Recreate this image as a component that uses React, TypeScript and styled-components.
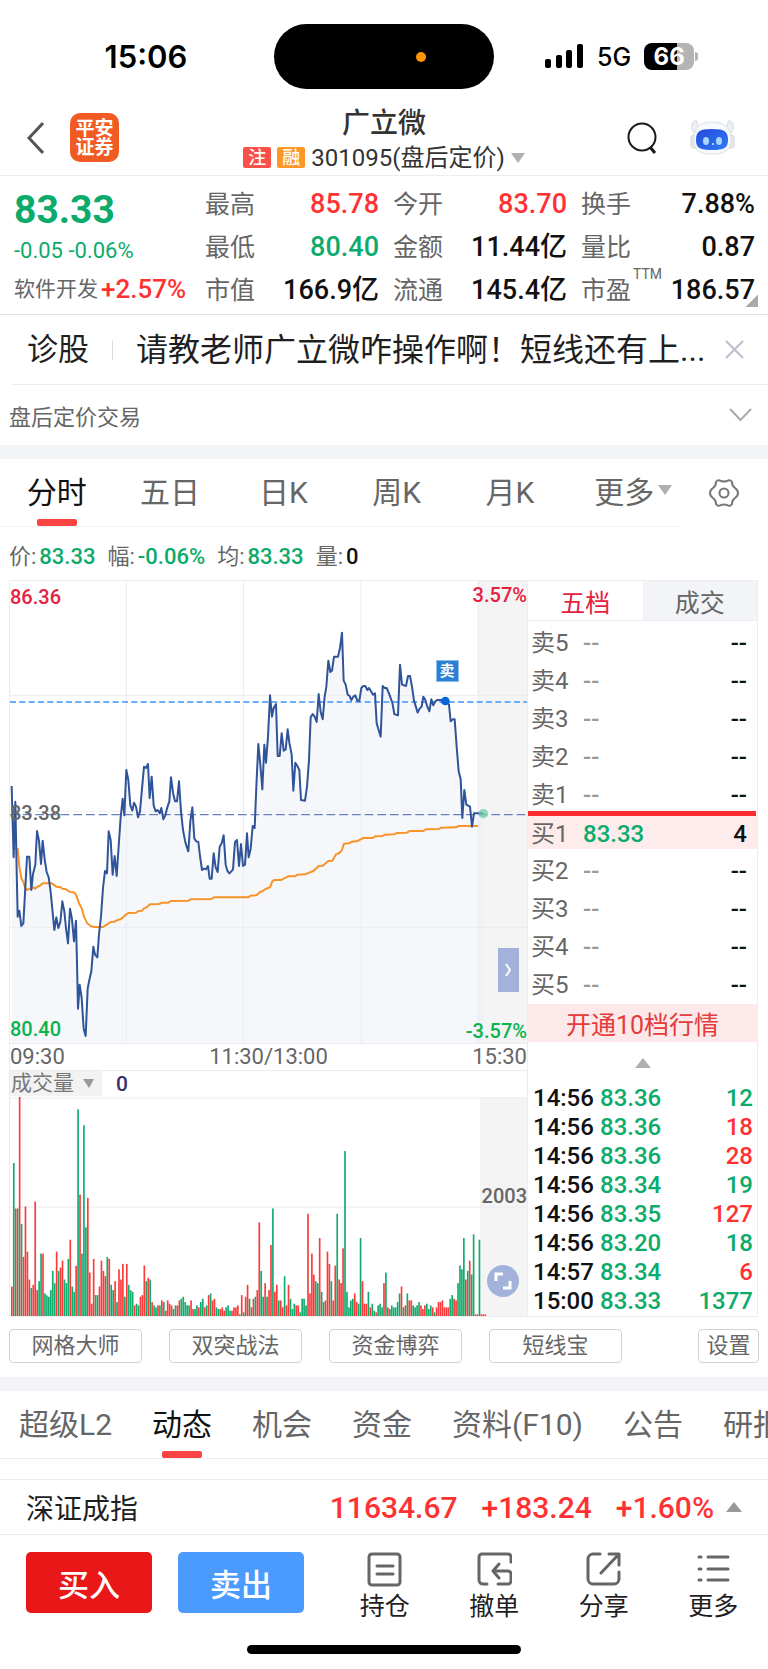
import React from 'react';
import styled, { createGlobalStyle, css } from 'styled-components';

const green = '#0cab6b';
const red = '#fe3232';
const crimson = '#e6203f';
const grey = '#666666';
const line = '#ececf1';
const band = '#f3f4f8';

const tone: Record<string, string> = { up: red, down: green, flat: '#111111' };

const GlobalStyle = createGlobalStyle`
  * { box-sizing: border-box; }
  body {
    margin: 0;
    background: #ffffff;
    color: #1f1f1f;
    font-family: Roboto, "Noto Sans CJK SC", sans-serif;
  }
  button, select {
    font-family: inherit;
    border: 0;
    padding: 0;
    background: none;
    color: inherit;
    cursor: pointer;
  }
  table { border-collapse: collapse; border-spacing: 0; }
  td, th { padding: 0; font-weight: 400; text-align: left; }
  h1, p, dl, dd, dt { margin: 0; font-weight: 400; }
  svg { display: block; }
`;

const Page = styled.div`
  width: 100%;
  overflow: hidden;
`;

/* ---------- status bar ---------- */

const StatusBar = styled.div`
  display: grid;
  grid-template-columns: 1fr 220px 1fr;
  align-items: center;
  height: 89px;
  padding-top: 24px;
  color: #000000;
`;

const Clock = styled.div`
  padding-left: 18px;
  text-align: center;
  font: 600 31px/34px Inter, sans-serif;
`;

const Island = styled.div`
  display: flex;
  align-items: center;
  justify-content: flex-end;
  height: 65px;
  padding-right: 68px;
  border-radius: 33px;
  background: #000000;
`;

const IslandDot = styled.span`
  width: 10px;
  height: 10px;
  border-radius: 5px;
  background: #ff9500;
`;

const StatusRight = styled.div`
  display: flex;
  align-items: center;
  gap: 13px;
  padding-left: 51px;
`;

const Network = styled.span`
  font: 500 25px/28px Inter, sans-serif;
`;

const Battery = styled.span`
  width: 50px;
  border-radius: 8px;
  background: linear-gradient(to right, #000000 66%, #b4b4b4 66%);
  color: #ffffff;
  text-align: center;
  font: 700 24px/27px Inter, sans-serif;
`;

const BatteryBox = styled.span`
  display: flex;
  align-items: center;
  gap: 1px;
  &::after {
    content: '';
    width: 3px;
    height: 9px;
    border-radius: 0 3px 3px 0;
    background: #b4b4b4;
  }
`;

/* ---------- title bar ---------- */

const Header = styled.header`
  display: grid;
  grid-template-columns: 1fr auto 1fr;
  align-items: center;
  height: 87px;
  padding-top: 11px;
  border-bottom: 1px solid ${line};
`;

const HeaderSide = styled.div<{ $end?: boolean }>`
  display: flex;
  align-items: center;
  gap: 26px;
  padding: 0 33px 0 27px;
  ${(p) => p.$end && css`justify-content: flex-end; gap: 33px;`}
`;

const Logo = styled.div`
  display: grid;
  place-content: center;
  width: 49px;
  height: 49px;
  border-radius: 10px;
  background: #f05a23;
  color: #ffffff;
  text-align: center;
  font-weight: 700;
  font-size: 19px;
  line-height: 19px;
`;

const TitleBlock = styled.div`
  padding-top: 2px;
  text-align: center;
`;

const Title = styled.h1`
  margin-bottom: 4px;
  color: #333333;
  font-size: 28px;
  font-weight: 500;
  line-height: 34px;
`;

const Subtitle = styled.div`
  display: flex;
  align-items: center;
  gap: 6px;
  color: #333333;
  font-size: 24px;
  line-height: 26px;
`;

const Tag = styled.span<{ $color: string }>`
  width: 28px;
  border-radius: 2px;
  background: ${(p) => p.$color};
  color: #ffffff;
  text-align: center;
  font-size: 18px;
  font-weight: 500;
  line-height: 21px;
`;

const Caret = styled.i<{ $up?: boolean; $color?: string }>`
  flex: none;
  width: 0;
  height: 0;
  border: solid transparent;
  border-width: ${(p) => (p.$up ? '0 8px 10px' : '10px 7px 0')};
  border-bottom-color: ${(p) => (p.$up ? p.$color || '#b0b0b0' : 'transparent')};
  border-top-color: ${(p) => (p.$up ? 'transparent' : p.$color || '#b0b0b0')};
`;

/* ---------- quote ---------- */

const Quote = styled.section`
  position: relative;
  display: grid;
  grid-template-columns: 177fr 174fr 174fr 174fr;
  gap: 14px;
  height: 139px;
  padding: 7px 13px 2px 14px;
  border-bottom: 1px solid #e2e2ea;
`;

const PriceColumn = styled.div`
  color: ${green};
  white-space: nowrap;
`;

const LastPrice = styled.p`
  font-size: 39px;
  font-weight: 700;
  line-height: 54px;
`;

const Change = styled.p`
  font-size: 22px;
  line-height: 28px;
`;

const Sector = styled.p`
  display: flex;
  gap: 3px;
  color: ${grey};
  font-size: 21px;
  line-height: 48px;
  strong { color: ${red}; font-size: 26px; font-weight: 500; }
`;

const StatColumn = styled.dl`
  white-space: nowrap;
`;

const Stat = styled.div`
  display: flex;
  justify-content: space-between;
  line-height: 43px;
`;

const StatLabel = styled.dt`
  display: flex;
  color: ${grey};
  font-size: 25px;
  sup { font-size: 14px; line-height: 10px; margin: 0 0 0 2px; }
`;

const StatValue = styled.dd<{ $tone: string }>`
  color: ${(p) => tone[p.$tone]};
  font-size: 27px;
  font-weight: 500;
`;

const Corner = styled.i`
  position: absolute;
  right: 10px;
  bottom: 7px;
  width: 12px;
  height: 12px;
  background: linear-gradient(135deg, transparent 50%, #aaaaaa 50%);
`;

/* ---------- notice rows ---------- */

const Diagnosis = styled.div`
  display: flex;
  align-items: center;
  height: 70px;
  margin-left: 12px;
  padding: 0 24px 0 15px;
  border-bottom: 1px solid ${line};
  font-size: 31px;
  line-height: 44px;
`;

const DiagnosisText = styled.p`
  flex: 1;
  min-width: 0;
  margin: 0 18px 0 23px;
  padding-left: 24px;
  overflow: hidden;
  white-space: nowrap;
  font-size: 32px;
  background: linear-gradient(#dddde2, #dddde2) left / 1px 20px no-repeat;
`;

const Notice = styled.div`
  display: flex;
  align-items: center;
  justify-content: space-between;
  height: 60px;
  padding: 0 16px 0 9px;
  color: ${grey};
  font-size: 22px;
`;

const Band = styled.div`
  height: 14px;
  background: ${band};
`;

/* ---------- period tabs ---------- */

const PeriodBar = styled.div`
  display: grid;
  grid-template-columns: 680fr 88fr;
  height: 68px;
`;

const PeriodTabs = styled.nav`
  display: grid;
  grid-template-columns: repeat(6, 1fr);
  border-bottom: 1px solid #f2f2f5;
`;

const tabText = css<{ $active?: boolean }>`
  position: relative;
  padding-bottom: 6px;
  color: ${(p) => (p.$active ? '#111111' : grey)};
  font-size: 30px;
  ${(p) =>
    p.$active &&
    css`
      &::after {
        content: '';
        position: absolute;
        bottom: 0;
        left: 50%;
        width: 40px;
        height: 7px;
        margin-left: -20px;
        border-radius: 2px;
        background: #fa4444;
      }
    `}
`;

const PeriodTab = styled.button<{ $active?: boolean; $menu?: boolean }>`
  ${tabText}
  display: flex;
  align-items: center;
  justify-content: center;
  gap: 4px;
  padding-left: ${(p) => (p.$menu ? '20px' : '0')};
  white-space: nowrap;
`;

const IconButton = styled.button`
  display: grid;
  place-items: center;
`;

const InfoRow = styled.div`
  display: flex;
  align-items: center;
  gap: 12px;
  height: 53px;
  padding: 0 9px;
  color: ${grey};
  font-size: 22px;
  white-space: nowrap;
`;

const Figure = styled.strong<{ $tone: string }>`
  margin-left: 3px;
  color: ${(p) => tone[p.$tone]};
  font-weight: 500;
`;

/* ---------- board ---------- */

const Board = styled.section`
  display: flex;
  margin: 0 10px 0 9px;
  border: 1px solid ${line};
`;

const ChartColumn = styled.div`
  flex: 1;
  min-width: 0;
  border-right: 1px solid ${line};
`;

const Plot = styled.div<{ $height: number }>`
  position: relative;
  height: ${(p) => p.$height}px;
  svg.plot { width: 100%; height: 100%; }
`;

const PlotLabel = styled.span<{ $color: string; $right?: boolean; $top: string }>`
  position: absolute;
  top: ${(p) => p.$top};
  ${(p) => (p.$right ? 'right: 0;' : 'left: 0;')}
  color: ${(p) => p.$color};
  font-size: 20px;
  font-weight: 500;
  line-height: 24px;
`;

const SellMark = styled.span`
  position: absolute;
  left: 82.5%;
  top: 80px;
  width: 21px;
  background: #2b7fd4;
  outline: 1px solid #8dbbea;
  color: #ffffff;
  text-align: center;
  font-size: 15px;
  font-weight: 700;
  line-height: 20px;
`;

const NextButton = styled.button`
  position: absolute;
  right: 8px;
  top: 367px;
  display: grid;
  place-items: center;
  width: 21px;
  height: 44px;
  background: #a2b2da;
`;

const ExpandButton = styled.button`
  position: absolute;
  right: 8px;
  bottom: 19px;
  display: grid;
  place-items: center;
  width: 32px;
  height: 32px;
  border-radius: 16px;
  background: #a2b2da;
`;

const TimeAxis = styled.div`
  display: flex;
  justify-content: space-between;
  border: solid ${line};
  border-width: 1px 0;
  color: ${grey};
  font-size: 22px;
  line-height: 26px;
`;

const VolumeHead = styled.div`
  display: flex;
  align-items: center;
  gap: 14px;
  height: 26px;
  color: #3d3069;
  font-size: 21px;
  font-weight: 500;
`;

const IndicatorPicker = styled.label`
  display: flex;
  align-items: center;
  height: 25px;
  padding: 0 8px 0 1px;
  align-self: flex-start;
  background: #f2f2f2;
  color: #777777;
  select {
    appearance: none;
    width: 72px;
    height: 25px;
    font-size: 21px;
    line-height: 25px;
  }
`;

const BookColumn = styled.div`
  display: flex;
  flex-direction: column;
  flex: none;
  width: 229px;
  white-space: nowrap;
`;

const BookTabs = styled.div`
  display: grid;
  grid-template-columns: 1fr 1fr;
  height: 40px;
  margin-bottom: 3px;
  border-bottom: 1px solid ${line};
`;

const BookTab = styled.button<{ $active?: boolean }>`
  background: ${(p) => (p.$active ? '#ffffff' : band)};
  color: ${(p) => (p.$active ? crimson : grey)};
  font-size: 25px;
`;

const Ladder = styled.table`
  width: 100%;
  table-layout: fixed;
`;

const LadderRow = styled.tr<{ $best?: boolean }>`
  height: ${(p) => (p.$best ? 36 : 38)}px;
  background: ${(p) => (p.$best ? 'linear-gradient(#feecec, #feecec) top / 100% 33px no-repeat' : 'none')};
`;

const LadderCell = styled.td<{ $tone?: string; $end?: boolean }>`
  width: ${(p) => (p.$end ? 'auto' : '75px')};
  padding-right: ${(p) => (p.$end ? '10px' : '0')};
  color: ${(p) => (p.$tone ? tone[p.$tone] : '#999999')};
  text-align: ${(p) => (p.$end ? 'right' : 'left')};
  font-size: 24px;
  font-weight: 500;
  line-height: 33px;
`;

const LadderLabel = styled.th`
  width: 55px;
  padding-left: 3px;
  color: ${grey};
  font-size: 24px;
  line-height: 33px;
`;

const SpreadBar = styled.div`
  position: relative;
  height: 5px;
  margin: -3px 1px 0 0;
  background: #fb2c30;
`;

const UnlockButton = styled.button`
  height: 38px;
  background: #fde9e9;
  color: #e53b3b;
  font-size: 25px;
`;

const BookMore = styled.button`
  display: flex;
  justify-content: center;
  padding: 16px 0;
`;

const Trades = styled.table`
  flex: 1;
  width: 100%;
  table-layout: fixed;
`;

const TradeCell = styled.td<{ $tone: string; $end?: boolean }>`
  width: ${(p) => (p.$end ? 'auto' : '67px')};
  padding-left: ${(p) => (p.$end ? 0 : 5)}px;
  padding-right: ${(p) => (p.$end ? 4 : 0)}px;
  color: ${(p) => tone[p.$tone]};
  text-align: ${(p) => (p.$end ? 'right' : 'left')};
  font-size: 24px;
  font-weight: 500;
  line-height: 29px;
`;

/* ---------- tools ---------- */

const Tools = styled.div`
  display: flex;
  gap: 27px;
  padding: 12px 9px 14px;
`;

const Tool = styled.button<{ $small?: boolean }>`
  flex: 0 1 ${(p) => (p.$small ? 61 : 133)}px;
  height: 34px;
  margin-left: ${(p) => (p.$small ? 'auto' : '0')};
  border: 1px solid #d2d2d2;
  border-radius: 4px;
  color: ${grey};
  font-size: 22px;
  line-height: 32px;
  white-space: nowrap;
`;

const SectionTabs = styled.nav`
  display: flex;
  gap: 40px;
  height: 68px;
  padding-left: 19px;
  border-bottom: 1px solid ${line};
  overflow: hidden;
`;

const SectionTab = styled.button<{ $active?: boolean }>`
  ${tabText}
  flex: none;
`;

const IndexRow = styled.div`
  display: flex;
  align-items: center;
  gap: 24px;
  height: 56px;
  margin-top: 20px;
  padding: 0 26px;
  border: solid ${line};
  border-width: 1px 0;
  color: ${red};
  font-size: 30px;
  font-weight: 500;
  white-space: nowrap;
`;

const IndexName = styled.span`
  margin-right: auto;
  color: #1f1f1f;
  font-size: 28px;
  font-weight: 400;
`;

const IndexChange = styled.span`
  display: flex;
  align-items: center;
  gap: 12px;
`;

const TradeBar = styled.footer`
  display: flex;
  gap: 26px;
  padding: 17px 0 21px 26px;
`;

const OrderButton = styled.button<{ $color: string }>`
  flex: 0 0 126px;
  height: 61px;
  border-radius: 5px;
  background: ${(p) => p.$color};
  color: #ffffff;
  font-size: 31px;
  font-weight: 500;
`;

const Actions = styled.div`
  display: grid;
  grid-template-columns: repeat(4, 1fr);
  flex: 1;
`;

const Action = styled.button`
  display: flex;
  flex-direction: column;
  align-items: center;
  gap: 3px;
  font-size: 25px;
  line-height: 34px;
`;

const HomeIndicator = styled.div`
  width: 274px;
  height: 9px;
  margin: 0 auto 15px;
  border-radius: 5px;
  background: #000000;
`;

/* ---------- data ---------- */

const stats = [
  [
    { label: '最高', value: '85.78', tone: 'up' },
    { label: '最低', value: '80.40', tone: 'down' },
    { label: '市值', value: '166.9亿', tone: 'flat' },
  ],
  [
    { label: '今开', value: '83.70', tone: 'up' },
    { label: '金额', value: '11.44亿', tone: 'flat' },
    { label: '流通', value: '145.4亿', tone: 'flat' },
  ],
  [
    { label: '换手', value: '7.88%', tone: 'flat' },
    { label: '量比', value: '0.87', tone: 'flat' },
    { label: '市盈', sup: 'TTM', value: '186.57', tone: 'flat' },
  ],
];

const figures = [
  ['价:', '83.33', 'down'],
  ['幅:', '-0.06%', 'down'],
  ['均:', '83.33', 'down'],
  ['量:', '0', 'flat'],
];

const asks = ['卖5', '卖4', '卖3', '卖2', '卖1'];
const bids = ['买1', '买2', '买3', '买4', '买5'];

const trades = [
  ['14:56', '83.36', '12', 'down'],
  ['14:56', '83.36', '18', 'up'],
  ['14:56', '83.36', '28', 'up'],
  ['14:56', '83.34', '19', 'down'],
  ['14:56', '83.35', '127', 'up'],
  ['14:56', '83.20', '18', 'down'],
  ['14:57', '83.34', '6', 'up'],
  ['15:00', '83.33', '1377', 'down'],
];

const priceLine =
  '35,648 38,760 41,862 46,695 50,900 53,1040 58,1022 64,1068 70,1060 75,970 81,860 88,860 94,960 99,912 106,884 111,783 117,812 123,882 128,812 134,868 140,906 146,922 152,966 158,1028 163,1080 169,1042 175,1074 181,1056 187,994 193,1024 198,1074 204,1120 210,1016 216,1048 222,1114 228,1052 231,1180 234,1316 239,1244 245,1284 251,1376 257,1398 263,1256 268,1230 274,1204 280,1130 285,1154 292,1162 297,1092 303,1040 309,954 315,903 321,910 326,784 332,810 338,914 344,858 350,918 356,828 362,742 368,686 373,736 379,600 385,630 391,706 397,722 402,698 408,710 414,742 420,724 426,656 432,590 438,594 444,582 449,684 455,620 461,706 467,724 473,720 479,730 484,714 490,748 496,736 502,712 508,694 513,622 519,668 525,694 531,694 537,634 543,724 549,780 555,812 560,830 565,844 571,754 577,712 583,806 589,814 595,816 600,858 606,900 612,896 618,898 624,888 629,926 635,926 641,850 647,892 653,906 659,830 665,820 671,796 677,884 682,902 688,910 694,904 699,898 705,816 711,810 717,888 723,822 729,888 735,884 741,790 746,862 752,836 758,768 764,774 769,650 775,522 781,584 787,658 793,524 798,578 804,500 810,376 816,440 821,414 828,402 833,558 839,558 845,490 851,542 857,538 863,478 868,518 875,554 880,662 886,578 892,588 898,600 903,690 915,692 921,650 927,570 932,442 938,432 944,440 950,456 956,372 962,426 968,448 974,380 979,350 985,272 991,306 996,302 1002,260 1014,260 1020,234 1026,188 1031,332 1037,344 1043,374 1049,378 1054,390 1060,380 1066,376 1072,392 1078,392 1084,354 1090,348 1096,348 1102,360 1107,354 1113,364 1119,374 1125,370 1130,460 1136,480 1142,500 1148,348 1154,354 1160,354 1166,368 1177,398 1183,432 1194,436 1200,284 1206,344 1218,348 1224,318 1230,318 1236,350 1242,392 1253,428 1259,416 1265,410 1270,380 1276,390 1282,410 1288,424 1294,388 1300,406 1306,394 1312,390 1335,390 1347,404 1352,454 1358,448 1364,448 1370,530 1376,604 1382,628 1387,744 1393,660 1399,704 1410,710 1416,770 1422,730 1450,730';

const averageLine =
  '41,834 53,836 58,890 64,924 70,936 75,952 81,960 90,956 100,952 105,956 112,950 119,948 128,940 155,940 169,950 181,951 187,956 198,958 210,966 222,967 228,974 237,1000 245,1015 252,1040 262,1060 272,1068 282,1071 309,1071 320,1064 332,1056 344,1055 352,1050 362,1048 374,1037 385,1029 408,1028 416,1023 426,1022 432,1015 440,1012 450,1003 478,1002 486,998 505,998 513,993 565,992 572,988 635,987 642,982 745,982 752,977 769,976 780,966 787,964 795,958 804,954 810,952 816,936 822,930 844,930 852,925 865,919 885,919 893,914 915,913 940,903 956,888 968,887 985,873 997,872 1008,853 1018,849 1025,842 1032,821 1048,820 1055,815 1070,814 1090,804 1118,804 1125,799 1148,798 1154,794 1183,793 1190,789 1220,788 1230,783 1270,783 1277,778 1317,777 1323,773 1368,772 1376,768 1434,768';

/* One entry per minute: direction and the top edge of the bar on the plot. */
const volumeBars =
  'r743 g371 r508 g508 r172 g555 r654 r502 r638 r722 g748 r738 r487 r754 g727 g644 r644 g764 g770 g774 g754 g696 g733 r638 g696 r686 r665 g722 g733 g660 r602 g743 g759 r681 g209 r466 g644 g257 g565 r476 r701 r795 r660 g769 g769 r743 r665 r696 r712 g654 r660 g738 g754 r727 g790 r691 r722 r675 g774 r675 g738 g754 g759 r800 g795 g800 r774 r769 r680 g727 r717 g722 r790 g800 g806 r800 g800 r785 g790 r816 r785 r795 r800 g811 g800 r800 r785 g780 g774 g790 g800 g800 r785 r811 g811 g800 r806 g790 g780 r806 g800 r769 g764 r785 r780 g806 g811 r811 r806 r816 g806 g800 g816 r816 r806 r806 r800 g827 r769 g821 r774 r738 g780 r806 r780 g774 r754 r550 g696 g774 r733 g774 r754 r618 g508 r759 r738 g785 r785 r806 g712 r800 r738 g780 g811 g795 r800 r800 g821 g780 g780 g800 r524 r764 r644 r707 g727 g733 r597 g759 g790 r785 r638 r675 g727 r785 r680 g524 r722 r733 r628 g335 g759 g806 g785 g780 r764 r790 g795 g597 r727 r795 r795 g759 r806 g795 g816 r821 g800 g795 g806 r733 g701 r806 g811 g800 g806 g806 g790 g764 r743 g806 r800 g764 r785 r785 g800 g806 g800 g790 r800 r811 r800 g795 g811 g800 r806 g821 r806 r790 r790 r785 r806 r806 r806 g780 g769 r780 r785 g733 g680 g691 g597 r722 g696 r665 g707 g586 r827 r827 g602 r827 r827 r827'
    .split(' ')
    .map((entry, minute) => ({
      x: 33 + (minute * 1397) / 239,
      top: Number(entry.slice(1)),
      color: entry[0] === 'r' ? '#fb3b3b' : '#12ab6e',
    }));

/* ---------- drawings ---------- */

function Robot() {
  return (
    <svg width="45" height="35" viewBox="0 0 45 35">
      <defs>
        <linearGradient id="face" x1="0" y1="0" x2="1" y2="1">
          <stop offset="0" stopColor="#2449d8" />
          <stop offset="1" stopColor="#2f7cf8" />
        </linearGradient>
      </defs>
      <path
        d="M5 1c-4 1-4 7-2 11l4 3 5-8C9 8 7 5 7 2 7 1 6 0 5 1zM40 1c4 1 4 7 2 11l-4 3-5-8c3 1 5-2 5-5 0-1 1-2 2-1z"
        fill="#eceff3"
        stroke="#d5dae0"
      />
      <rect x="1" y="15" width="7" height="13" rx="3" fill="#e6e9ee" stroke="#d0d5dc" />
      <rect x="37" y="15" width="7" height="13" rx="3" fill="#e6e9ee" stroke="#d0d5dc" />
      <path
        d="M22 2c10 0 19 4 19 17 0 12-7 15-19 15S4 31 4 19C4 6 12 2 22 2z"
        fill="#f7f9fb"
        stroke="#dde1e6"
      />
      <path d="M22 9c13 0 16 3 16 11s-4 10-16 10S6 28 6 20 9 9 22 9z" fill="url(#face)" />
      <ellipse cx="16" cy="21" rx="3" ry="4" fill="#a9d6ff" />
      <ellipse cx="29" cy="21" rx="3" ry="4" fill="#a9d6ff" />
      <circle cx="23" cy="24" r="1" fill="#d8ecff" />
    </svg>
  );
}

function PricePlot() {
  return (
    <svg className="plot" viewBox="30 33 1551 1386" preserveAspectRatio="none">
      <rect x="1434" y="33" width="150" height="1386" fill="#f4f4f4" />
      <g stroke="#ececef" strokeWidth="3">
        <path d="M379 33V1419M730 33V1419M1083 33V1419M1434 33V1419" />
        <path d="M30 376H1581M30 1072H1581" />
        <path d="M30 724H1581" strokeDasharray="26 12" />
      </g>
      <polygon points={`35,1419 ${priceLine} 1450,1419`} fill="#e9ecf5" fillOpacity="0.42" />
      <path d="M30 396H1581" stroke="#6cacfc" strokeWidth="6" strokeDasharray="18 10" />
      <path d="M30 734H1581" stroke="#6680bd" strokeWidth="4" strokeDasharray="26 12" />
      <polyline points={averageLine} fill="none" stroke="#f8932a" strokeWidth="6" strokeLinejoin="round" />
      <polyline points={priceLine} fill="none" stroke="#2f5499" strokeWidth="6" strokeLinejoin="round" />
      <circle cx="1336" cy="393" r="13" fill="#0a66d8" />
      <circle cx="1450" cy="731" r="14" fill="#6fcfa6" fillOpacity="0.75" />
    </svg>
  );
}

function VolumePlot() {
  return (
    <svg className="plot" viewBox="30 172 1551 660" preserveAspectRatio="none">
      <rect x="1440" y="172" width="144" height="660" fill="#f4f4f4" />
      <path d="M30 175H1581M30 504H1581" stroke="#ececef" strokeWidth="3" />
      {volumeBars.map((bar, i) => (
        <rect key={i} x={bar.x} y={bar.top} width="5" height={832 - bar.top} fill={bar.color} />
      ))}
    </svg>
  );
}

const actions = [
  {
    label: '持仓',
    d: 'M5 2H30a3 3 0 0 1 3 3V30a3 3 0 0 1-3 3H5a3 3 0 0 1-3-3V5a3 3 0 0 1 3-3zM10 14H26M10 22H26',
  },
  {
    label: '撤单',
    d: 'M34 10V5a3 3 0 0 0-3-3H5a3 3 0 0 0-3 3V28a4 4 0 0 0 4 4H10M21 32H31a3 3 0 0 0 3-3V22a3 3 0 0 0-3-3H16M22 12L16 19L22 26',
  },
  {
    label: '分享',
    d: 'M14 2H7a5 5 0 0 0-5 5V27a5 5 0 0 0 5 5H28a5 5 0 0 0 5-5V20M23 2H33V13M33 2L15 21',
  },
  { label: '更多', d: 'M3 5H5M12 5H32M3 17H5M12 17H32M3 28H5M12 28H32' },
];

/* ---------- page ---------- */

export default function App() {
  return (
    <Page>
      <GlobalStyle />

      <StatusBar>
        <Clock>15:06</Clock>
        <Island>
          <IslandDot />
        </Island>
        <StatusRight>
          <svg width="39" height="25" viewBox="0 0 39 25">
            <rect x="0" y="15" width="6" height="9" rx="2" />
            <rect x="11" y="11" width="6" height="13" rx="2" />
            <rect x="21" y="6" width="6" height="18" rx="2" />
            <rect x="32" y="0" width="6" height="24" rx="2" />
          </svg>
          <Network>5G</Network>
          <BatteryBox>
            <Battery>66</Battery>
          </BatteryBox>
        </StatusRight>
      </StatusBar>

      <Header>
        <HeaderSide>
          <IconButton aria-label="返回">
            <svg width="17" height="32" viewBox="0 0 17 32" fill="none" stroke="#555555" strokeWidth="3">
              <path d="M16 1L2 16L16 31" />
            </svg>
          </IconButton>
          <Logo>
            <span>平安</span>
            <span>证券</span>
          </Logo>
        </HeaderSide>
        <TitleBlock>
          <Title>广立微</Title>
          <Subtitle>
            <Tag $color="#fb5048">注</Tag>
            <Tag $color="#fd9827">融</Tag>
            <span>301095(盘后定价)</span>
            <Caret />
          </Subtitle>
        </TitleBlock>
        <HeaderSide $end>
          <IconButton aria-label="搜索">
            <svg width="30" height="32" viewBox="0 0 30 32" fill="none" stroke="#1a1a1a" strokeWidth="2">
              <circle cx="15" cy="15" r="13.5" />
              <path d="M23 25L28 31" strokeWidth="3" />
            </svg>
          </IconButton>
          <IconButton aria-label="智能助手">
            <Robot />
          </IconButton>
        </HeaderSide>
      </Header>

      <Quote>
        <PriceColumn>
          <LastPrice>83.33</LastPrice>
          <Change>-0.05 -0.06%</Change>
          <Sector>
            软件开发<strong>+2.57%</strong>
          </Sector>
        </PriceColumn>
        {stats.map((column, i) => (
          <StatColumn key={i}>
            {column.map((stat) => (
              <Stat key={stat.label}>
                <StatLabel>
                  {stat.label}
                  {'sup' in stat && <sup>{stat.sup}</sup>}
                </StatLabel>
                <StatValue $tone={stat.tone}>{stat.value}</StatValue>
              </Stat>
            ))}
          </StatColumn>
        ))}
        <Corner />
      </Quote>

      <Diagnosis>
        <span>诊股</span>
        <DiagnosisText>请教老师广立微咋操作啊！短线还有上...</DiagnosisText>
        <IconButton aria-label="关闭">
          <svg width="19" height="19" viewBox="0 0 19 19" stroke="#bcbccb" strokeWidth="2">
            <path d="M1 1L18 18M18 1L1 18" />
          </svg>
        </IconButton>
      </Diagnosis>
      <Notice>
        <span>盘后定价交易</span>
        <IconButton aria-label="展开">
          <svg width="23" height="14" viewBox="0 0 23 14" fill="none" stroke="#aaaaaa" strokeWidth="2">
            <path d="M1 1L11.500 12L22 1" />
          </svg>
        </IconButton>
      </Notice>
      <Band />

      <PeriodBar>
        <PeriodTabs>
          <PeriodTab $active>分时</PeriodTab>
          <PeriodTab>五日</PeriodTab>
          <PeriodTab>日K</PeriodTab>
          <PeriodTab>周K</PeriodTab>
          <PeriodTab>月K</PeriodTab>
          <PeriodTab $menu>
            更多
            <Caret />
          </PeriodTab>
        </PeriodTabs>
        <IconButton aria-label="图表设置">
          <svg width="30" height="30" viewBox="0 0 30 30" fill="none" stroke="#777777" strokeWidth="2">
            <path d="M12 3Q15 4 18 3Q21 1 23 4Q23 8 26 10Q29 12 29 15Q29 18 26 20Q23 22 23 26Q21 29 18 27Q15 26 12 27Q9 29 7 26Q7 22 4 20Q1 18 1 15Q1 12 4 10Q7 8 7 4Q9 1 12 3Z" />
            <circle cx="15" cy="15" r="4.500" />
          </svg>
        </IconButton>
      </PeriodBar>

      <InfoRow>
        {figures.map(([label, value, t]) => (
          <span key={label}>
            {label}
            <Figure $tone={t}>{value}</Figure>
          </span>
        ))}
      </InfoRow>

      <Board>
        <ChartColumn>
          <Plot $height={462}>
            <PricePlot />
            <PlotLabel $color={crimson} $top="4px">86.36</PlotLabel>
            <PlotLabel $color={crimson} $top="2px" $right>3.57%</PlotLabel>
            <PlotLabel $color={grey} $top="220px">83.38</PlotLabel>
            <PlotLabel $color="#0bb34c" $top="436px">80.40</PlotLabel>
            <PlotLabel $color="#0bb34c" $top="438px" $right>-3.57%</PlotLabel>
            <SellMark>卖</SellMark>
            <NextButton aria-label="收起盘口">
              <svg width="7" height="14" viewBox="0 0 7 14" fill="none" stroke="#ffffff" strokeWidth="2">
                <path d="M1 1L5 7L1 13" />
              </svg>
            </NextButton>
          </Plot>
          <TimeAxis>
            <span>09:30</span>
            <span>11:30/13:00</span>
            <span>15:30</span>
          </TimeAxis>
          <VolumeHead>
            <IndicatorPicker>
              <select aria-label="副图指标" defaultValue="成交量">
                <option>成交量</option>
              </select>
              <svg width="11" height="9" viewBox="0 0 11 9" fill="#999999">
                <path d="M0 0H11L6 9Z" />
              </svg>
            </IndicatorPicker>
            <span>0</span>
          </VolumeHead>
          <Plot $height={219}>
            <VolumePlot />
            <PlotLabel $color={grey} $top="87px" $right>2003</PlotLabel>
            <ExpandButton aria-label="全屏">
              <svg width="18" height="18" viewBox="0 0 18 18" fill="none" stroke="#ffffff" strokeWidth="3">
                <path d="M2 9V2H9M16 9V16H9" />
              </svg>
            </ExpandButton>
          </Plot>
        </ChartColumn>

        <BookColumn>
          <BookTabs>
            <BookTab $active>五档</BookTab>
            <BookTab>成交</BookTab>
          </BookTabs>
          <Ladder>
            <tbody>
              {asks.map((level) => (
                <LadderRow key={level}>
                  <LadderLabel scope="row">{level}</LadderLabel>
                  <LadderCell>--</LadderCell>
                  <LadderCell $end $tone="flat">--</LadderCell>
                </LadderRow>
              ))}
            </tbody>
          </Ladder>
          <SpreadBar />
          <Ladder>
            <tbody>
              {bids.map((level, i) => (
                <LadderRow key={level} $best={i === 0}>
                  <LadderLabel scope="row">{level}</LadderLabel>
                  <LadderCell $tone={i === 0 ? 'down' : undefined}>{i === 0 ? '83.33' : '--'}</LadderCell>
                  <LadderCell $end $tone="flat">{i === 0 ? '4' : '--'}</LadderCell>
                </LadderRow>
              ))}
            </tbody>
          </Ladder>
          <UnlockButton>开通10档行情</UnlockButton>
          <BookMore aria-label="更多成交">
            <Caret $up />
          </BookMore>
          <Trades>
            <tbody>
              {trades.map(([time, price, amount, t], i) => (
                <tr key={i}>
                  <TradeCell $tone="flat">{time}</TradeCell>
                  <TradeCell $tone="down">{price}</TradeCell>
                  <TradeCell $tone={t} $end>{amount}</TradeCell>
                </tr>
              ))}
            </tbody>
          </Trades>
        </BookColumn>
      </Board>

      <Tools>
        <Tool>网格大师</Tool>
        <Tool>双突战法</Tool>
        <Tool>资金博弈</Tool>
        <Tool>短线宝</Tool>
        <Tool $small>设置</Tool>
      </Tools>
      <Band />

      <SectionTabs>
        <SectionTab>超级L2</SectionTab>
        <SectionTab $active>动态</SectionTab>
        <SectionTab>机会</SectionTab>
        <SectionTab>资金</SectionTab>
        <SectionTab>资料(F10)</SectionTab>
        <SectionTab>公告</SectionTab>
        <SectionTab>研报</SectionTab>
      </SectionTabs>

      <IndexRow>
        <IndexName>深证成指</IndexName>
        <span>11634.67</span>
        <span>+183.24</span>
        <IndexChange>
          +1.60%
          <Caret $up $color="#999999" />
        </IndexChange>
      </IndexRow>

      <TradeBar>
        <OrderButton $color="#e91717">买入</OrderButton>
        <OrderButton $color="#4b9bff">卖出</OrderButton>
        <Actions>
          {actions.map((action) => (
            <Action key={action.label}>
              <svg
                width="35"
                height="35"
                viewBox="0 0 35 35"
                fill="none"
                stroke="#666666"
                strokeWidth="3"
                strokeLinecap="round"
                strokeLinejoin="round"
              >
                <path d={action.d} />
              </svg>
              {action.label}
            </Action>
          ))}
        </Actions>
      </TradeBar>
      <HomeIndicator />
    </Page>
  );
}
